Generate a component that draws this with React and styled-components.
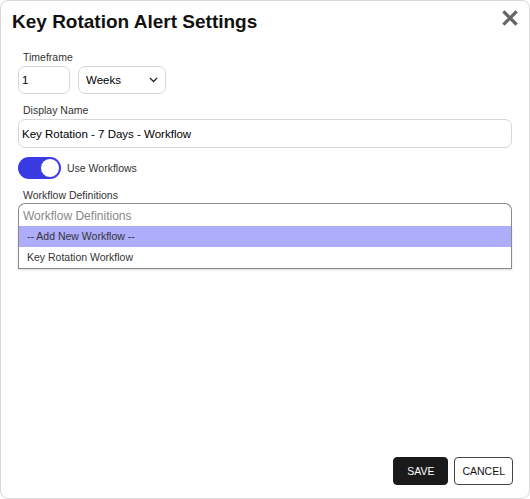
import React, { useState } from 'react'
import styled, { createGlobalStyle } from 'styled-components'

const GlobalStyle = createGlobalStyle`
  html, body {
    margin: 0;
    padding: 0;
    background: #ffffff;
    font-family: "Liberation Sans", Arial, sans-serif;
  }
  * { box-sizing: border-box; }
`

const Dialog = styled.div`
  width: 530px;
  height: 499px;
  border: 1px solid #d9d9d9;
  border-radius: 8px;
  background: #fff;
  display: flex;
  flex-direction: column;
`

const Header = styled.div`
  display: flex;
  justify-content: space-between;
  align-items: flex-start;
  padding: 9px 11px 0 11px;
`

const Title = styled.h2`
  margin: 0;
  font-size: 19px;
  line-height: 24px;
  font-weight: 700;
  color: #111;
`

const CloseButton = styled.button`
  border: none;
  background: none;
  padding: 0;
  cursor: pointer;
  display: flex;
`

const Body = styled.div`
  padding: 16px 17px 0 17px;
  display: flex;
  flex-direction: column;
`

const Label = styled.label`
  display: block;
  font-size: 10.5px;
  line-height: 14px;
  color: #333;
  padding-left: 5px;
  margin-bottom: ${p => (p.tight ? 1 : 2)}px;
`

const Field = styled.div`
  margin-bottom: ${p => p.gap || 10}px;
`

const Row = styled.div`
  display: flex;
  gap: 8px;
`

const TextInput = styled.input`
  width: ${p => p.width || '100%'};
  height: ${p => p.height || 29}px;
  border: 1px solid #d6d6d6;
  border-radius: 7px;
  padding: 0 3px;
  font-family: inherit;
  font-size: 11.5px;
  color: #000;
  outline: none;
`

const SelectWrap = styled.div`
  position: relative;
  width: 88px;
  height: 28px;
`

const Select = styled.select`
  appearance: none;
  width: 100%;
  height: 100%;
  border: 1px solid #d6d6d6;
  border-radius: 7px;
  background: #fff;
  padding: 0 7px;
  font-family: inherit;
  font-size: 11.5px;
  color: #000;
  outline: none;
`

const Chevron = styled.svg`
  position: absolute;
  right: 8px;
  top: 11px;
  pointer-events: none;
`

const ToggleRow = styled.div`
  display: flex;
  align-items: center;
  gap: 6px;
  margin-bottom: 9px;
`

const Track = styled.button`
  width: 43px;
  height: 22px;
  border-radius: 11px;
  border: none;
  padding: 0;
  background: ${p => (p.on ? '#3a3ae2' : '#ccc')};
  position: relative;
  cursor: pointer;
`

const Knob = styled.span`
  position: absolute;
  top: 1px;
  left: ${p => (p.on ? '22px' : '1px')};
  width: 20px;
  height: 20px;
  border-radius: 50%;
  background: #fff;
  border: 1px solid #3a3ae2;
`

const ToggleText = styled.span`
  font-size: 10.5px;
  color: #333;
`

const Combo = styled.div`
  display: flex;
  flex-direction: column;
`

const ComboInput = styled.input`
  width: 100%;
  height: 23px;
  border: 1px solid #8a8a8a;
  border-bottom: none;
  border-radius: 7px 7px 0 0;
  padding: 2px 3px 0 4px;
  font-family: inherit;
  font-size: 12px;
  color: #000;
  outline: none;
  &::placeholder { color: #888; }
`

const Menu = styled.ul`
  list-style: none;
  margin: 0;
  padding: 0;
  border: 1px solid #8a8a8a;
  border-top: none;
  box-shadow: 0 1px 2px rgba(0,0,0,0.15);
`

const Option = styled.li`
  height: 21px;
  line-height: 21px;
  padding-left: 8px;
  font-size: 10.5px;
  color: #333;
  background: ${p => (p.active ? '#adadfc' : '#fff')};
  cursor: pointer;
`

const Footer = styled.div`
  margin-top: auto;
  display: flex;
  justify-content: flex-end;
  gap: 6px;
  padding: 0 16px 13px 0;
`

const Button = styled.button`
  height: 28px;
  min-width: ${p => (p.primary ? 55 : 58)}px;
  padding: 0 7px;
  border-radius: 4px;
  font-family: inherit;
  font-size: 10.5px;
  border: 1px solid ${p => (p.primary ? '#1a1a1a' : '#444')};
  background: ${p => (p.primary ? '#1a1a1a' : '#fff')};
  color: ${p => (p.primary ? '#fff' : '#111')};
  cursor: pointer;
`

const App = () => {
  const [useWorkflows, setUseWorkflows] = useState(true)

  return (
    <>
      <GlobalStyle />
      <Dialog>
        <Header>
          <Title>Key Rotation Alert Settings</Title>
          <CloseButton aria-label="Close">
            <svg width="16" height="16" viewBox="0 0 16 16">
              <path d="M2.5 2.5 L13.5 13.5 M13.5 2.5 L2.5 13.5" stroke="#666" strokeWidth="3.2" strokeLinecap="square" />
            </svg>
          </CloseButton>
        </Header>
        <Body>
          <Field gap={9}>
            <Label>Timeframe</Label>
            <Row>
              <TextInput width="52px" height={28} defaultValue="1" />
              <SelectWrap>
                <Select defaultValue="Weeks">
                  <option>Days</option>
                  <option>Weeks</option>
                  <option>Months</option>
                </Select>
                <Chevron width="9" height="6" viewBox="0 0 9 6">
                  <path d="M1 1 L4.5 4.5 L8 1" fill="none" stroke="#222" strokeWidth="1.3" />
                </Chevron>
              </SelectWrap>
            </Row>
          </Field>
          <Field gap={9}>
            <Label>Display Name</Label>
            <TextInput defaultValue="Key Rotation - 7 Days - Workflow" />
          </Field>
          <ToggleRow>
            <Track on={useWorkflows} onClick={() => setUseWorkflows(!useWorkflows)}>
              <Knob on={useWorkflows} />
            </Track>
            <ToggleText>Use Workflows</ToggleText>
          </ToggleRow>
          <Field>
            <Label tight>Workflow Definitions</Label>
            <Combo>
              <ComboInput placeholder="Workflow Definitions" />
              <Menu>
                <Option active>-- Add New Workflow --</Option>
                <Option>Key Rotation Workflow</Option>
              </Menu>
            </Combo>
          </Field>
        </Body>
        <Footer>
          <Button primary>SAVE</Button>
          <Button>CANCEL</Button>
        </Footer>
      </Dialog>
    </>
  )
}

export default App
